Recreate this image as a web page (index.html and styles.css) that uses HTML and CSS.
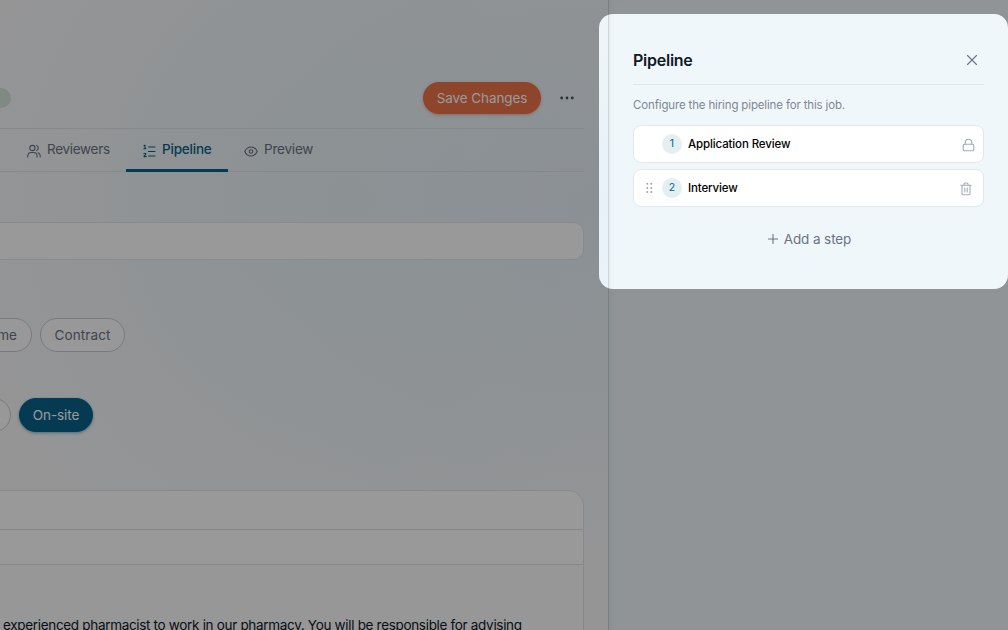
FILE: index.html
```
<!DOCTYPE html>
<html lang="en">
<head>
    <meta charset="UTF-8">
    <meta name="viewport" content="width=device-width, initial-scale=1.0">
    <title>Edit Job - Pipeline</title>
    <link rel="stylesheet" href="styles.css">
</head>
<body>
    <div class="app">
        <!-- Job Editor -->
        <main class="main">
            <div class="content">
                <div class="header">
                    <div class="status"></div>
                    <div class="header-actions">
                        <button class="save-button">Save Changes</button>
                        <button class="more-button" aria-label="More">
                            <svg width="16" height="16" viewBox="0 0 16 16"><circle cx="2.7" cy="8" r="1.45"/><circle cx="8" cy="8" r="1.45"/><circle cx="13.3" cy="8" r="1.45"/></svg>
                        </button>
                    </div>
                </div>

                <!-- Tabs -->
                <nav class="tabs">
                    <a class="tab reviewers">
                        <svg width="14" height="14" viewBox="0 0 14 14"><circle cx="5.4" cy="4" r="2.6"/><path d="M.8 13v-1.2a3.300 3.300 0 0 1 3.300-3.300h2.600a3.300 3.300 0 0 1 3.300 3.300V13M9.600 1.500a2.700 2.700 0 0 1 0 5M11 8.700a3.200 3.200 0 0 1 2.200 3.100V13"/></svg>
                        <span>Reviewers</span>
                    </a>
                    <a class="tab pipeline active">
                        <svg width="13" height="14" viewBox="0 0 13 14"><path d="M5.500 3H12M5.500 7.500H12M5.500 12H12"/><path d="M1 1.800l1-.6v3.600M.8 4.800h2.200M.9 9.800c.5-.8 2-.7 1.900.3 0 .8-1.200 1.400-1.900 2.500h2.200"/></svg>
                        <span>Pipeline</span>
                    </a>
                    <a class="tab preview">
                        <svg width="14" height="14" viewBox="0 0 14 14"><path d="M.8 7.500C2 4.700 4.200 3 7 3s5 1.700 6.200 4.500C12 10.300 9.800 12 7 12S2 10.300.8 7.500z"/><circle cx="7" cy="7.500" r="1.800"/></svg>
                        <span>Preview</span>
                    </a>
                </nav>

                <div class="text-field"></div>

                <div class="options job-type">
                    <button class="option part-time">Part-time</button>
                    <button class="option contract">Contract</button>
                </div>
                <div class="options workplace">
                    <button class="option hybrid"></button>
                    <button class="option onsite selected">On-site</button>
                </div>

                <!-- Description Editor -->
                <div class="editor">
                    <div class="editor-bar"></div>
                    <div class="editor-bar small"></div>
                    <p class="editor-text">experienced pharmacist to work in our pharmacy. You will be responsible for advising</p>
                </div>
            </div>
        </main>

        <!-- Pipeline Panel -->
        <aside class="panel">
            <div class="panel-header">
                <h2>Pipeline</h2>
                <button class="close-button" aria-label="Close">
                    <svg width="12" height="12" viewBox="0 0 12 12"><path d="M1.500 1.500l9 9M10.500 1.500l-9 9"/></svg>
                </button>
            </div>
            <p class="panel-hint">Configure the hiring pipeline for this job.</p>
            <div class="steps">
                <div class="step">
                    <span class="handle"></span>
                    <span class="number">1</span>
                    <span class="step-name">Application Review</span>
                    <svg class="lock" width="13" height="14" viewBox="0 0 13 14"><rect x="1.200" y="6.200" width="10.600" height="6.600" rx="1.300"/><path d="M3.300 6V4.400a3.200 3.200 0 0 1 6.400 0V6"/></svg>
                </div>
                <div class="step">
                    <span class="handle">
                        <svg width="8" height="12" viewBox="0 0 8 12"><circle cx="1.300" cy="1.700" r="1"/><circle cx="5.300" cy="1.700" r="1"/><circle cx="1.300" cy="5.900" r="1"/><circle cx="5.300" cy="5.900" r="1"/><circle cx="1.300" cy="10.100" r="1"/><circle cx="5.300" cy="10.100" r="1"/></svg>
                    </span>
                    <span class="number">2</span>
                    <span class="step-name">Interview</span>
                    <svg class="trash" width="12" height="14" viewBox="0 0 12 14"><path d="M.8 3.200h10.400M2 3.200v8.200a1.300 1.300 0 0 0 1.300 1.300h5.400a1.300 1.300 0 0 0 1.300-1.300V3.200M4 3V2a1 1 0 0 1 1-1h2a1 1 0 0 1 1 1v1M4.800 6v4M7.200 6v4"/></svg>
                </div>
            </div>
            <button class="add-step">
                <svg width="10" height="10" viewBox="0 0 10 10"><path d="M5 .5v9M.5 5h9"/></svg>
                <span>Add a step</span>
            </button>
        </aside>

        <!-- Tour Spotlight -->
        <div class="spotlight"></div>
    </div>
</body>
</html>
```
FILE: styles.css
```
* {
    margin: 0;
    padding: 0;
    box-sizing: border-box;
    font-family: Inter, sans-serif;
}

body {
    background-color: #f0f8fb;
}

button {
    border: none;
    background: transparent;
    cursor: pointer;
}

svg {
    fill: none;
    stroke: currentColor;
    stroke-width: 1.1;
    stroke-linecap: round;
    stroke-linejoin: round;
    flex-shrink: 0;
}

.app {
    position: relative;
    display: flex;
    width: 1008px;
    height: 630px;
    overflow: hidden;
}

/* Job Editor */
.main {
    width: 608px;
    overflow: hidden;
    background:
        radial-gradient(ellipse 520px 360px at 590px 200px, #e8f1f8, rgba(232, 241, 248, 0)),
        radial-gradient(ellipse 400px 420px at 350px 200px, #ebf4f6, rgba(235, 244, 246, 0)),
        #f8f8fa;
}

.content {
    width: 644px;
    margin-left: -60px;
}

.header {
    display: flex;
    align-items: center;
    justify-content: space-between;
    height: 129px;
    padding-top: 68px;
    padding-right: 1px;
    border-bottom: 1px solid #dfe5ea;
}

.status {
    width: 71px;
    height: 20px;
    border-radius: 10px;
    background-color: #d2e6da;
}

.header-actions {
    display: flex;
    align-items: center;
    gap: 10px;
}

.save-button {
    width: 118px;
    height: 32px;
    padding-bottom: 1px;
    border-radius: 16px;
    background-color: #ec734a;
    color: #fff;
    font-size: 13.5px;
    letter-spacing: -0.1px;
    box-shadow: 0 1px 3px rgba(236, 115, 74, 0.5);
}

.more-button {
    display: flex;
    align-items: center;
    justify-content: center;
    width: 32px;
    height: 32px;
    color: #4b5563;
}

.more-button svg {
    fill: currentColor;
    stroke: none;
}

/* Tabs */
.tabs {
    display: flex;
    height: 43px;
    padding-left: 71px;
    border-bottom: 1px solid #dfe5ea;
}

.tab {
    display: flex;
    align-items: center;
    height: 43px;
    padding-left: 16px;
    gap: 6px;
    color: #6b7280;
    font-size: 13.5px;
    letter-spacing: -0.2px;
    border-bottom: 3px solid transparent;
}

.tab svg {
    margin-top: 4px;
}

.tab span {
    margin-top: -1px;
}

.tab.active {
    color: #07638a;
    border-bottom-color: #07638a;
    font-weight: 500;
}

.reviewers {
    width: 115px;
    letter-spacing: -0.3px;
}

.pipeline {
    width: 102px;
    padding-left: 17px;
}

/* Form */
.text-field {
    height: 38px;
    margin-top: 50px;
    border: 1px solid #e0e6ea;
    border-radius: 10px;
    background-color: #fff;
}

.options {
    display: flex;
    gap: 8px;
}

.job-type {
    margin-top: 58px;
    padding-left: 8px;
}

.workplace {
    margin-top: 46px;
}

.option {
    height: 34px;
    padding-bottom: 1px;
    border: 1px solid #c8ccd6;
    border-radius: 17px;
    background-color: #fdfdfd;
    color: #6b7280;
    font-size: 13.5px;
    white-space: nowrap;
}

.part-time {
    width: 84px;
    padding-right: 14px;
    text-align: right;
}

.contract {
    width: 85px;
    letter-spacing: 0.1px;
}

.hybrid {
    width: 71px;
}

.onsite {
    width: 74px;
    letter-spacing: -0.1px;
}

.option.selected {
    border-color: #07638a;
    background-color: #07638a;
    color: #fff;
    box-shadow: 0 1px 3px rgba(7, 99, 138, 0.5);
}

.editor {
    height: 180px;
    margin-top: 58px;
    border: 1px solid #dfe5e8;
    border-radius: 16px;
    background-color: #fafcfb;
}

.editor-bar {
    height: 39px;
    border-bottom: 1px solid #dce2e7;
    border-radius: 0 15px 0 0;
    background-color: #fff;
}

.editor-bar.small {
    height: 35px;
    border-radius: 0;
}

.editor-text {
    padding: 51px 0 0 62px;
    font-size: 13.5px;
    line-height: 18px;
    letter-spacing: -0.32px;
    color: #111827;
    white-space: nowrap;
}

/* Pipeline Panel */
.panel {
    width: 400px;
    padding: 46px 24px 0;
    border-left: 1px solid #ccd4d8;
    background-color: #f0f7fb;
    box-shadow: inset 5px 0 6px -4px rgba(60, 90, 100, 0.08);
}

.panel-header {
    display: flex;
    align-items: center;
    justify-content: space-between;
    height: 39px;
    padding-bottom: 10px;
    border-bottom: 1px solid #e2e6ea;
}

.panel-header h2 {
    font-size: 16px;
    font-weight: 600;
    letter-spacing: -0.25px;
    color: #111827;
}

.close-button {
    display: flex;
    align-items: center;
    justify-content: center;
    width: 24px;
    height: 24px;
    color: #6b7280;
}

.panel-hint {
    margin-top: 12px;
    font-size: 11.5px;
    line-height: 16px;
    letter-spacing: -0.15px;
    color: #7f8794;
}

.steps {
    display: flex;
    flex-direction: column;
    gap: 6px;
    margin-top: 12px;
}

.step {
    display: flex;
    align-items: center;
    height: 38px;
    padding: 0 8px 0 12px;
    border: 1px solid #e2e8ec;
    border-radius: 8px;
    background-color: #fff;
}

.handle {
    display: flex;
    width: 16px;
    color: #9ca3af;
}

.handle svg {
    fill: currentColor;
    stroke: none;
}

.number {
    width: 20px;
    height: 20px;
    border-radius: 50%;
    background-color: #e4eff2;
    color: #07638a;
    font-size: 10.5px;
    line-height: 20px;
    text-align: center;
}

.step-name {
    flex: 1;
    margin: -1px 0 0 6px;
    font-size: 11.5px;
    font-weight: 500;
    letter-spacing: -0.13px;
    color: #000;
}

.lock,
.trash {
    margin-top: 1px;
    color: #a4abb5;
}

.trash {
    margin-right: 3px;
}

.add-step {
    display: flex;
    align-items: center;
    gap: 6px;
    margin: 22px auto 0;
    padding-left: 2px;
    height: 20px;
    color: #6b7280;
    font-size: 13.5px;
    letter-spacing: -0.1px;
}

/* Tour Spotlight */
.spotlight {
    position: absolute;
    left: 599px;
    top: 14px;
    width: 409px;
    height: 275px;
    border-radius: 14px;
    box-shadow: 0 0 0 1000px rgba(0, 0, 0, 0.4);
}
```
